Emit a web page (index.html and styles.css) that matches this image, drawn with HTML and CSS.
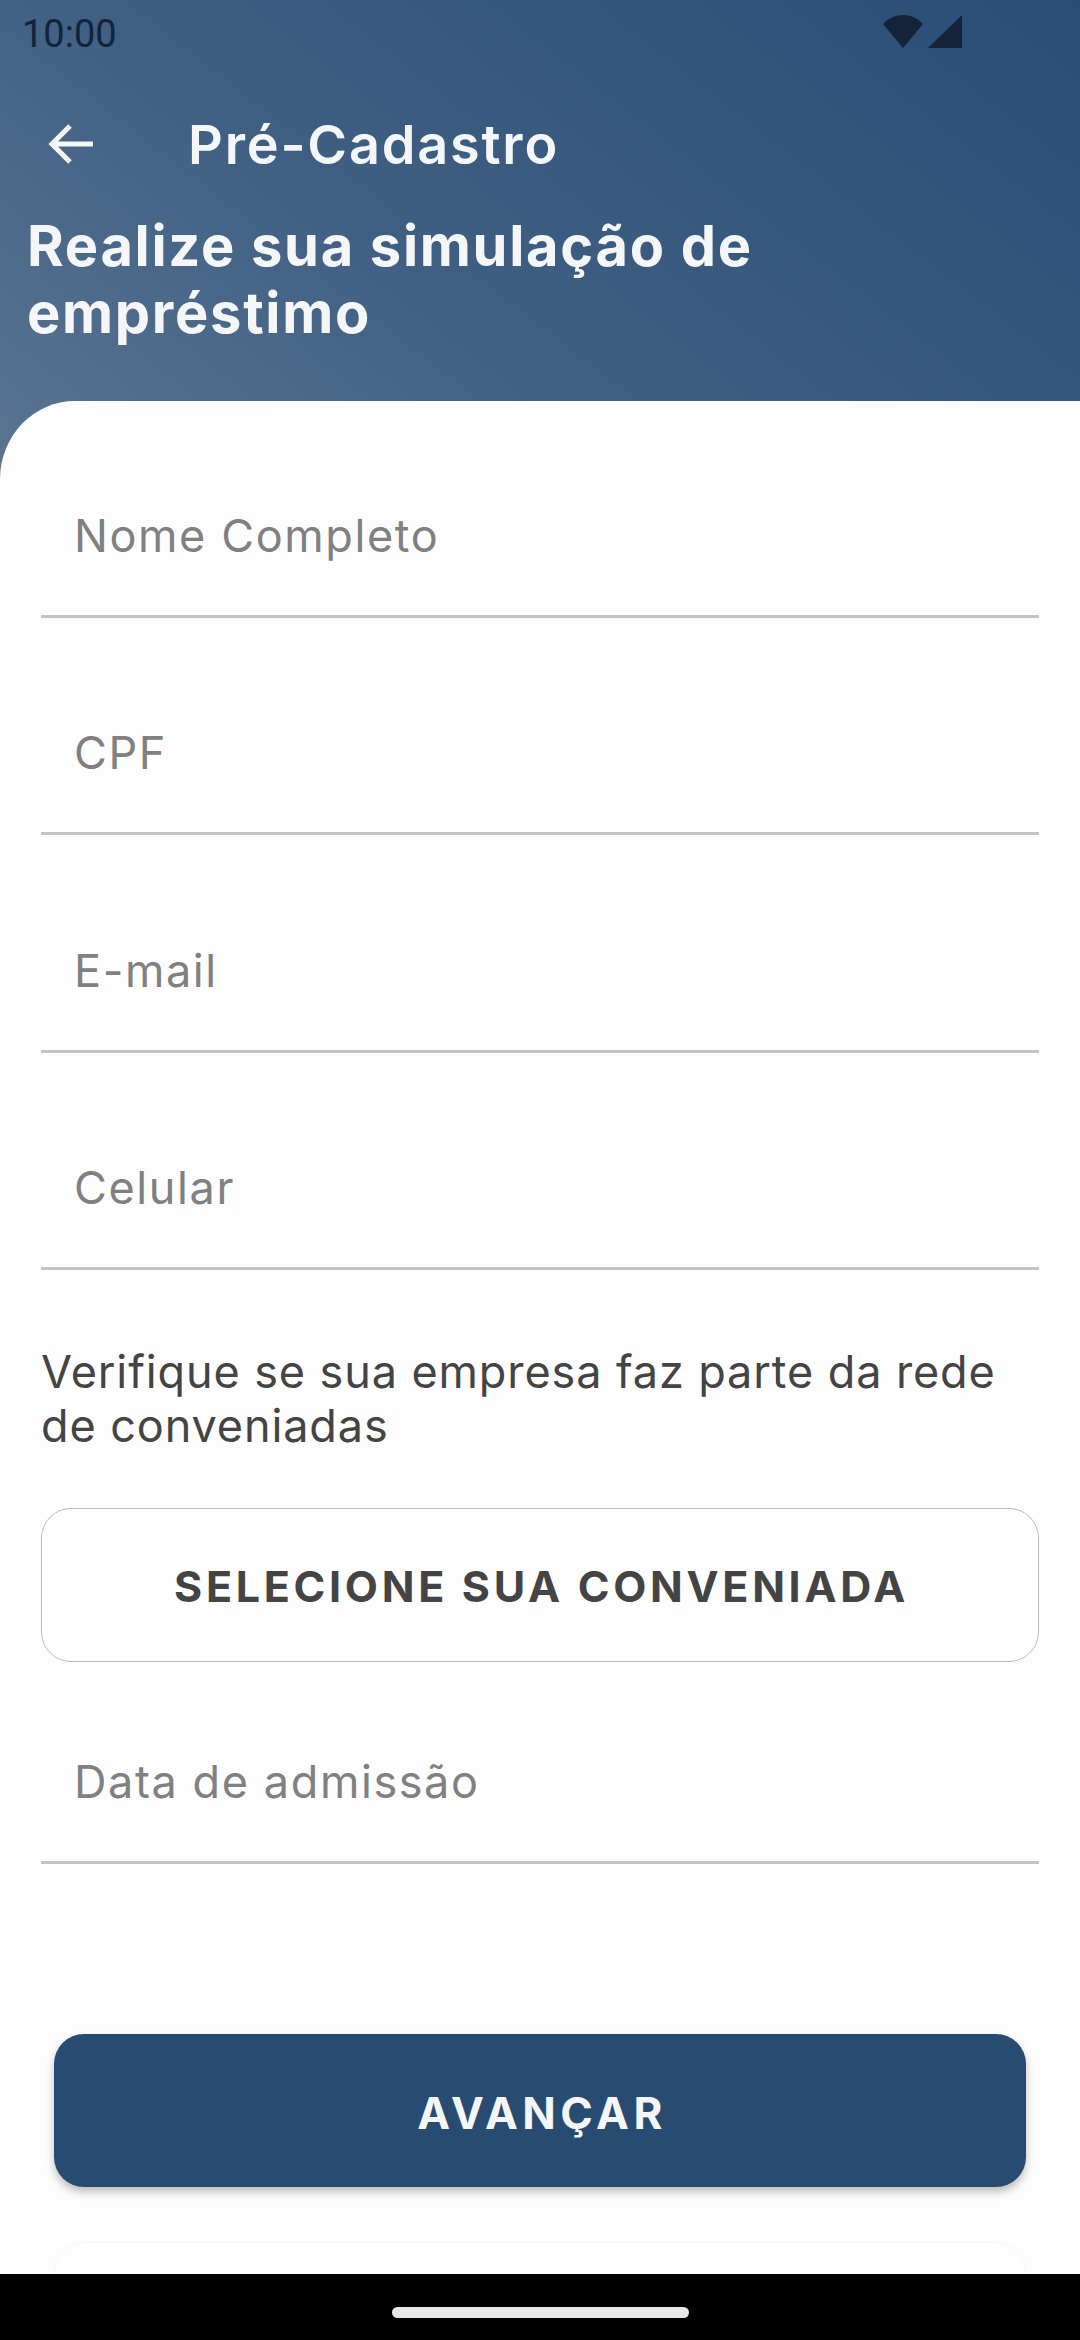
FILE: index.html
```html
<!DOCTYPE html>
<html lang="pt-BR">
<head>
    <meta charset="UTF-8">
    <meta name="viewport" content="width=device-width, initial-scale=1.0">
    <title>Pré-Cadastro</title>
    <link rel="stylesheet" href="styles.css">
</head>
<body>
    <div class="screen">
        <header class="top">
            <div class="status-bar">
                <span class="clock">10:00</span>
                <div class="status-icons">
                    <svg width="40" height="33" viewBox="0 0 40 33"><path d="M20 33 L0 9 C11 -3 29 -3 40 9 Z" fill="#12233a"/></svg>
                    <svg width="34" height="33" viewBox="0 0 34 33"><path d="M34 0 V33 H0 Z" fill="#12233a"/></svg>
                </div>
            </div>
            <div class="app-bar">
                <svg class="back" width="46" height="40" viewBox="0 0 46 40"><path d="M45 20 H4 M22 2 L4 20 L22 38" fill="none" stroke="#f5f6f8" stroke-width="5"/></svg>
                <span class="app-title">Pré-Cadastro</span>
            </div>
            <h1 class="headline">Realize sua simulação de<br>empréstimo</h1>
        </header>

        <main class="card">
            <div class="field">Nome Completo</div>
            <div class="field">CPF</div>
            <div class="field">E-mail</div>
            <div class="field">Celular</div>
            <p class="hint">Verifique se sua empresa faz parte da rede<br>de conveniadas</p>
            <div class="select-btn">SELECIONE SUA CONVENIADA</div>
            <div class="field">Data de admissão</div>
            <div class="next-btn">AVANÇAR</div>
            <div class="ghost-btn"></div>
        </main>

        <div class="nav-bar"><div class="nav-pill"></div></div>
    </div>
</body>
</html>
```

FILE: styles.css
```css
html, body {
    margin: 0;
    padding: 0;
}
body {
    font-family: 'Inter', 'Open Sans', sans-serif;
    background-color: #fdfdfd;
}
.screen {
    width: 1080px;
    height: 2340px;
    display: flex;
    flex-direction: column;
    overflow: hidden;
    background: linear-gradient(38deg, #5b7592 0%, #3f5f82 42%, #2a4c76 100%) no-repeat;
    background-size: 100% 480px;
}
.top {
    height: 401px;
    flex-shrink: 0;
    box-sizing: border-box;
}
.status-bar {
    height: 89px;
    display: flex;
    justify-content: space-between;
    align-items: flex-start;
    padding: 15px 118px 0 22px;
    box-sizing: border-box;
}
.clock {
    font-family: 'Roboto', sans-serif;
    font-size: 38px;
    line-height: 38px;
    color: #12233a;
}
.status-icons {
    display: flex;
    gap: 5px;
}
.app-bar {
    height: 110px;
    display: flex;
    align-items: center;
    padding-left: 48px;
    color: #f5f6f8;
}
.back {
    margin-right: 94px;
}
.app-title {
    font-size: 54px;
    font-weight: 600;
    letter-spacing: 1.8px;
}
.headline {
    margin: 14px 0 0 27px;
    font-size: 56px;
    line-height: 67px;
    font-weight: 700;
    letter-spacing: 1.7px;
    color: #f5f6f8;
}
.card {
    flex: 1;
    overflow: hidden;
    background-color: #fdfdfd;
    border-top-left-radius: 75px 78px;
    padding: 0 41px;
}
.field {
    height: 112px;
    margin-top: 105.4px;
    padding: 5px 0 0 33px;
    font-size: 45px;
    line-height: 50px;
    letter-spacing: 1.6px;
    color: #808080;
    border-bottom: 3px solid #c4c4c4;
    box-sizing: border-box;
}
.card .field:first-child {
    margin-top: 105px;
}
.select-btn + .field {
    margin-top: 90px;
}
.hint {
    margin: 75px 0 0;
    font-size: 45px;
    line-height: 54px;
    letter-spacing: 0.9px;
    color: #444;
}
.select-btn {
    margin-top: 55px;
    height: 154px;
    box-sizing: border-box;
    border: 1px solid #bbb;
    border-radius: 30px;
    padding: 2px 0 0 3px;
    display: flex;
    align-items: center;
    justify-content: center;
    font-size: 43px;
    font-weight: 700;
    letter-spacing: 3.7px;
    color: #444;
}
.next-btn {
    margin: 170px 13px 0;
    height: 153px;
    box-sizing: border-box;
    border-radius: 30px;
    background-color: #284b72;
    box-shadow: 0 5px 8px rgba(0,0,0,0.25);
    padding: 4px 0 0 4px;
    display: flex;
    align-items: center;
    justify-content: center;
    font-size: 44px;
    font-weight: 700;
    letter-spacing: 4.5px;
    color: #f5f6f8;
}
.ghost-btn {
    margin: 55px 13px 0;
    height: 153px;
    border: 1px solid #f5f5f5;
    border-radius: 30px;
}
.nav-bar {
    height: 66px;
    flex-shrink: 0;
    background-color: #000;
    display: flex;
    justify-content: center;
    padding-top: 33px;
    box-sizing: border-box;
}
.nav-pill {
    width: 297px;
    height: 11px;
    border-radius: 6px;
    background-color: #e8e8e8;
}
```
